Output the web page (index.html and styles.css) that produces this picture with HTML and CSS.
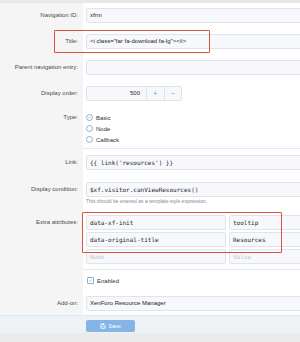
FILE: index.html
```html
<!DOCTYPE html>
<html>
<head>
<meta charset="utf-8">
<link rel="stylesheet" href="styles.css">
</head>
<body>
<div class="page">
  <div class="topbar"></div>
  <div class="form">
    <div class="row">
      <div class="lbl">Navigation ID:</div>
      <div class="ctl"><div class="input">xfrm</div></div>
    </div>
    <div class="row">
      <div class="lbl">Title:</div>
      <div class="ctl"><div class="input">&lt;i class="far fa-download fa-lg"&gt;&lt;/i&gt;</div></div>
    </div>
    <div class="row">
      <div class="lbl">Parent navigation entry:</div>
      <div class="ctl"><div class="input"></div></div>
    </div>
    <div class="row">
      <div class="lbl">Display order:</div>
      <div class="ctl spin">
        <div class="input num">500</div>
        <div class="sbtn plus">+</div>
        <div class="sbtn minus">−</div>
      </div>
    </div>
    <div class="row row-type">
      <div class="lbl lbl-short">Type:</div>
      <div class="ctl">
        <div class="opt"><span class="radio on"><svg viewBox="0 0 8 8" width="7" height="7"><path d="M2.2 4.1 L3.5 5.3 L5.9 2.7" fill="none" stroke="#5f9ad6" stroke-width="0.9"/></svg></span>Basic</div>
        <div class="opt"><span class="radio"></span>Node</div>
        <div class="opt"><span class="radio"></span>Callback</div>
      </div>
    </div>
    <div class="sep"></div>
    <div class="row row-link">
      <div class="lbl">Link:</div>
      <div class="ctl"><div class="input mono">{{ link('resources') }}</div></div>
    </div>
    <div class="row row-cond">
      <div class="lbl">Display condition:</div>
      <div class="ctl">
        <div class="input mono">$xf.visitor.canViewResources()</div>
        <div class="hint">This should be entered as a template-style expression.</div>
      </div>
    </div>
    <div class="row row-attrs">
      <div class="lbl">Extra attributes:</div>
      <div class="ctl attrs">
        <div class="input mono">data-xf-init</div>
        <div class="input mono">tooltip</div>
        <div class="input mono">data-original-title</div>
        <div class="input mono">Resources</div>
        <div class="input mono ph">Name</div>
        <div class="input mono ph">Value</div>
      </div>
    </div>
    <div class="sep"></div>
    <div class="row row-check">
      <div class="lbl"></div>
      <div class="ctl">
        <div class="opt"><span class="check"><svg viewBox="0 0 8 8" width="7" height="7"><path d="M2 4.1 L3.4 5.4 L6 2.6" fill="none" stroke="#5f9ad6" stroke-width="0.9"/></svg></span>Enabled</div>
      </div>
    </div>
    <div class="row row-addon">
      <div class="lbl">Add-on:</div>
      <div class="ctl"><div class="input">XenForo Resource Manager</div></div>
    </div>
  </div>
  <div class="footer">
    <div class="save"><svg viewBox="0 0 8 8" width="6" height="6"><path d="M1 1 H6 L7 2 V7 H1 Z" fill="none" stroke="#fff" stroke-width="0.8"/><rect x="2.3" y="1" width="3" height="1.8" fill="#fff"/><rect x="2.3" y="4.5" width="3.4" height="2.5" fill="none" stroke="#fff" stroke-width="0.6"/></svg>Save</div>
  </div>
  <div class="bottom"></div>
  <div class="annot annot-title"></div>
  <div class="annot annot-attrs"></div>
</div>
</body>
</html>
```

FILE: styles.css
```css
html, body {
  margin: 0;
  padding: 0;
  overflow: hidden;
  background: #ebebeb;
}
.page {
  position: relative;
  width: 300px;
  overflow: hidden;
  font-family: "Liberation Sans", Arial, sans-serif;
  font-size: 6px;
  color: #222;
}
.topbar {
  height: 3px;
  background: #e8e8e8;
}
.form {
  background: linear-gradient(to right, #f5f5f5 83px, #ffffff 83px);
}
.row {
  display: grid;
  grid-template-columns: 83px 217px;
  padding: 5px 0 6px;
}
.lbl {
  text-align: right;
  padding-right: 5px;
  line-height: 15px;
  color: #4a4a4a;
  white-space: nowrap;
}
.ctl {
  padding-left: 3px;
  min-width: 0;
  overflow: hidden;
}
.input {
  box-sizing: border-box;
  width: 283px;
  height: 15px;
  line-height: 13px;
  border: 1px solid #dfe4ea;
  border-radius: 2px;
  background: #f6f8fb;
  padding: 0 3px;
  white-space: nowrap;
  overflow: hidden;
  color: #1e1e1e;
}
.mono {
  font-family: "DejaVu Sans Mono", "Liberation Mono", monospace;
  font-size: 6px;
}
.ph {
  color: #c3c9d0;
}
.spin {
  display: flex;
}
.spin .num {
  width: 61px;
  flex: none;
  text-align: right;
  padding-right: 6px;
  border-radius: 2px 0 0 2px;
}
.sbtn {
  box-sizing: border-box;
  flex: none;
  width: 17.5px;
  height: 15px;
  line-height: 13px;
  text-align: center;
  border: 1px solid #dfe4ea;
  border-left: none;
  background: #f6f8fb;
  color: #6a9fd6;
  font-size: 7px;
}
.sbtn.minus {
  border-radius: 0 2px 2px 0;
  color: #7f9fbf;
}
.row-type {
  padding: 5px 0 3px;
}
.lbl-short {
  line-height: 11px;
}
.opt {
  display: flex;
  align-items: center;
  gap: 3px;
  height: 11px;
  color: #333;
}
.radio {
  box-sizing: border-box;
  width: 7px;
  height: 7px;
  border: 0.8px solid #8eb0d2;
  border-radius: 50%;
  background: #fff;
  display: flex;
  align-items: center;
  justify-content: center;
}
.radio svg {
  display: block;
}
.sep {
  height: 1px;
  margin-left: 83px;
  background: #e6e9ed;
}
.row-link {
  padding: 6px 0 6px;
}
.row-cond {
  padding: 6px 0 5px;
}
.hint {
  margin-top: 1px;
  font-size: 5px;
  line-height: 7px;
  color: #8a8a8a;
  white-space: nowrap;
}
.row-attrs {
  padding: 5px 0 5px;
}
.attrs {
  display: grid;
  grid-template-columns: 140px 140px;
  column-gap: 3px;
  row-gap: 2px;
}
.attrs .input {
  width: 140px;
}
.row-check {
  padding: 5px 0 4px;
}
.check {
  box-sizing: border-box;
  width: 7px;
  height: 7px;
  border: 0.8px solid #8eb0d2;
  border-radius: 1px;
  background: #fff;
  display: flex;
  align-items: center;
  justify-content: center;
  margin-left: 1px;
}
.row-addon {
  padding: 6px 0 4px;
}
.footer {
  height: 18px;
  box-sizing: border-box;
  padding: 4px 0 0 86px;
  background: #edf2f7;
  border-top: 1px solid #e3e8ee;
}
.save {
  width: 49px;
  height: 12px;
  border-radius: 2px;
  background: #84b5e6;
  color: #fff;
  display: flex;
  align-items: center;
  justify-content: center;
  gap: 2px;
  font-size: 5.5px;
}
.save svg {
  display: block;
}
.bottom {
  height: 10px;
  background: #ebebeb;
}
.annot {
  position: absolute;
  box-sizing: border-box;
  border: 1.5px solid #d9513f;
  border-radius: 1px;
}
.annot-title {
  left: 54px;
  top: 30px;
  width: 156px;
  height: 23px;
}
.annot-attrs {
  left: 82px;
  top: 212px;
  width: 200px;
  height: 41px;
}
```
